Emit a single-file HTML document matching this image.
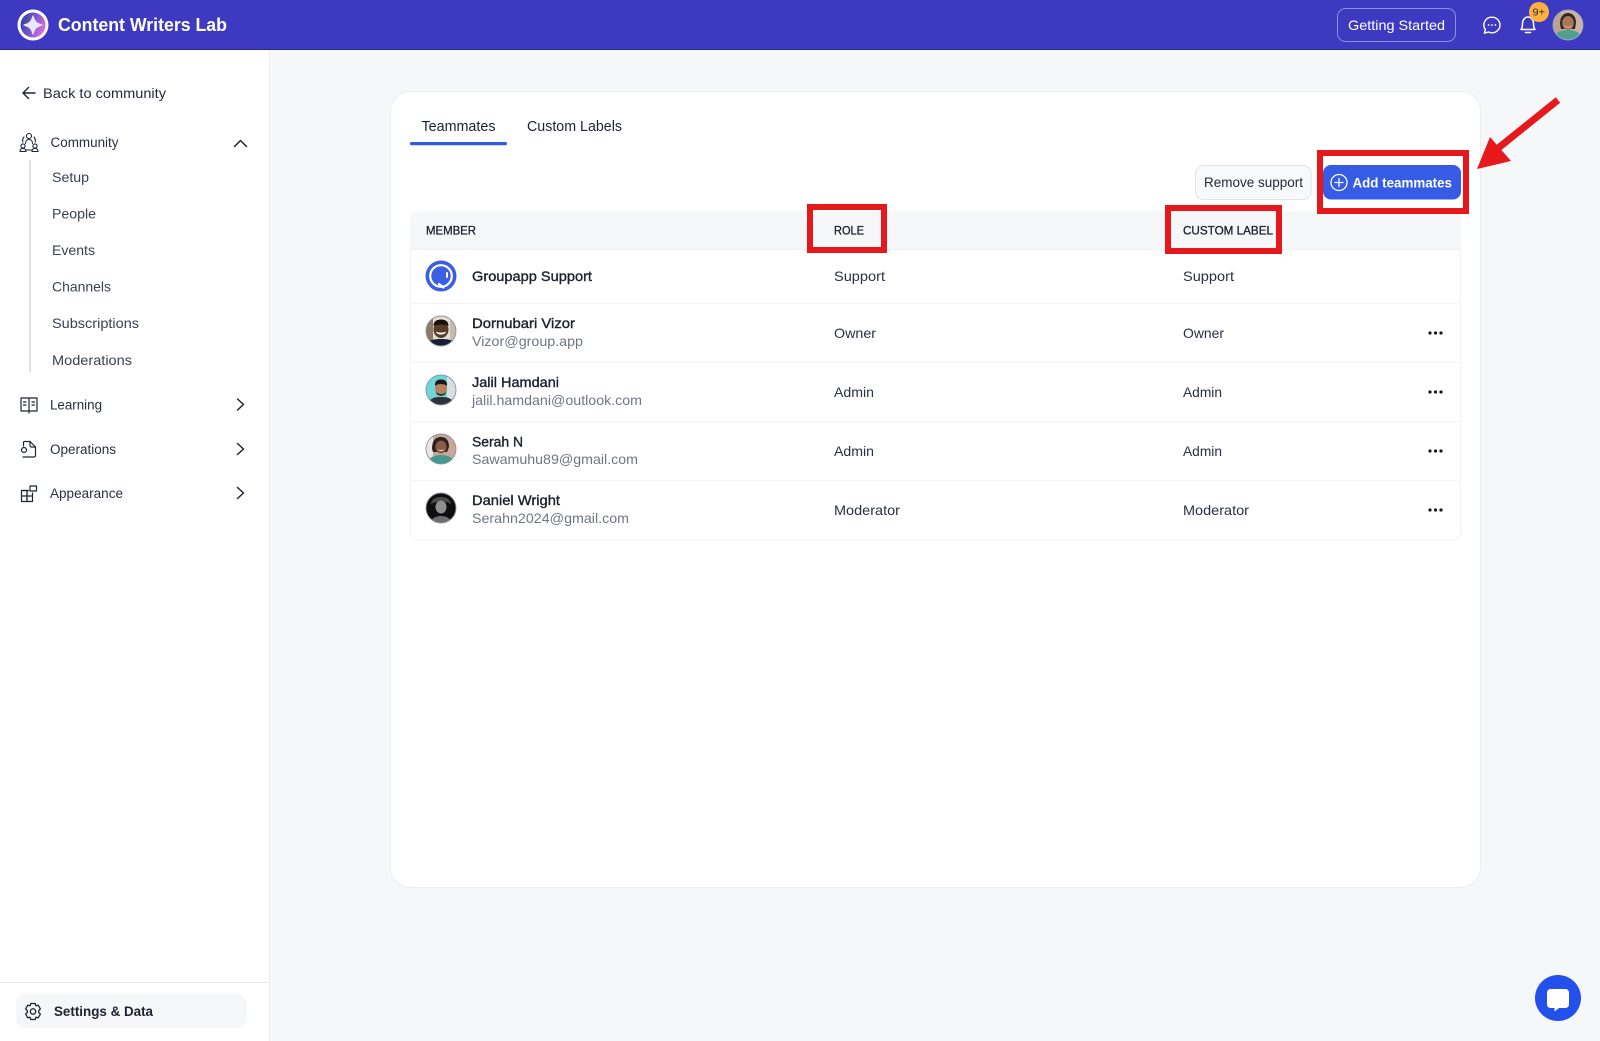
<!DOCTYPE html>
<html lang="en">
<head>
<meta charset="utf-8">
<title>Content Writers Lab</title>
<style>
html,body{margin:0;padding:0;width:1600px;height:1041px;overflow:hidden;background:#f6f7f9}
svg{display:block}
text{font-family:"Liberation Sans",sans-serif;fill:#1c2230;font-size:14px}
.side{font-size:13.5px;fill:#2a3040}
.sub{font-size:14px;fill:#3a4150}
.th{font-size:12px;fill:#1a1f2c;stroke:#1a1f2c;stroke-width:.3}
.nm{font-size:14px;fill:#1c2230;stroke:#1c2230;stroke-width:.38}
.em{font-size:14px;fill:#6f7682}
.val{font-size:14px;fill:#2a3040}
.ic{fill:none;stroke:#1f2533;stroke-width:1.3;stroke-linecap:round;stroke-linejoin:round}
.rb{fill:none;stroke:#e7181b;stroke-width:6}
</style>
</head>
<body>
<svg xmlns="http://www.w3.org/2000/svg" width="1600" height="1041" viewBox="0 0 1600 1041">
<defs>
<linearGradient id="lg" x1="0" y1="0" x2="1" y2="0.4"><stop offset="0" stop-color="#1f3a96"/><stop offset="0.5" stop-color="#6a55c4"/><stop offset="1" stop-color="#cf6cdc"/></linearGradient>
<clipPath id="c1"><circle cx="441" cy="331" r="15"/></clipPath>
<clipPath id="c2"><circle cx="441" cy="390" r="15"/></clipPath>
<clipPath id="c3"><circle cx="441" cy="449" r="15"/></clipPath>
<clipPath id="c4"><circle cx="441" cy="508" r="15"/></clipPath>
<clipPath id="c5"><circle cx="1568" cy="25" r="15"/></clipPath>
</defs>

<!-- page -->
<rect width="1600" height="1041" fill="#f6f7f9"/>

<!-- sidebar -->
<rect x="0" y="49" width="269" height="992" fill="#fff"/>
<rect x="269" y="49" width="1" height="992" fill="#eceef1"/>

<!-- header -->
<rect width="1600" height="49" fill="#3d3ac1"/>
<rect y="49" width="1600" height="1" fill="#2a2796"/>
<circle cx="33" cy="25" r="15.500" fill="#fff"/>
<circle cx="33" cy="25" r="12.500" fill="url(#lg)"/>
<path d="M33 16C34.500 21.500 36.500 23.500 42 25C36.500 26.500 34.500 28.500 33 34C31.500 28.500 29.500 26.500 24 25C29.500 23.500 31.500 21.500 33 16Z" fill="#ece6fc" stroke="#ece6fc" stroke-width="1.200" stroke-linejoin="round"/>
<text x="58" y="31" style="font-size:18px;font-weight:bold;fill:#fff" textLength="169" lengthAdjust="spacingAndGlyphs">Content Writers Lab</text>

<rect x="1337.500" y="8.500" width="118" height="33" rx="8" fill="none" stroke="#8f8dde" stroke-width="1"/>
<text x="1348" y="30" style="font-size:14px;fill:#fff" textLength="97" lengthAdjust="spacingAndGlyphs">Getting Started</text>

<!-- chat icon -->
<path d="M1492 17.200a8 7.800 0 0 1 0 15.600c-1.300 0-2.500-.3-3.500-.8l-4.200 1.200 1.100-3.600a7.800 7.800 0 0 1 6.600-12.400Z" fill="none" stroke="#fff" stroke-width="1.400" stroke-linejoin="round"/>
<circle cx="1488.600" cy="25" r=".9" fill="#fff"/><circle cx="1492" cy="25" r=".9" fill="#fff"/><circle cx="1495.400" cy="25" r=".9" fill="#fff"/>
<!-- bell -->
<path d="M1521 29.500c1.300-1.500 1.500-3 1.500-6a5.500 6.500 0 0 1 11 0c0 3 .2 4.500 1.500 6Z" fill="none" stroke="#fff" stroke-width="1.500" stroke-linejoin="round"/>
<path d="M1525.500 32.500h5" stroke="#fff" stroke-width="1.600" stroke-linecap="round"/>
<circle cx="1539" cy="12" r="10" fill="#fcb040"/>
<text x="1532.500" y="15.500" style="font-size:10px;fill:#2a2a3a" textLength="12.500" lengthAdjust="spacingAndGlyphs">9+</text>
<!-- header avatar -->
<g clip-path="url(#c5)">
<rect x="1553" y="10" width="30" height="30" fill="#c9b3a4"/>
<rect x="1553" y="10" width="8" height="30" fill="#b8a490"/>
<path d="M1560 24c0-8 4-11 8-11s8 3 8 10l-1 6h-14Z" fill="#33241f"/>
<ellipse cx="1568" cy="23" rx="5.800" ry="7" fill="#a87658"/>
<path d="M1564.500 25.500c2 2 5 2 7 0-.5 2.500-6.500 2.500-7 0Z" fill="#fff"/>
<path d="M1553 41c1-9 8-11 15-11s14 3 15 11Z" fill="#4f9e8f"/>
</g>
<circle cx="1568" cy="25" r="15" fill="none" stroke="#a9a8d8" stroke-width=".8"/>

<!-- sidebar content -->
<path d="M35 93H23M28.500 87.500L23 93l5.500 5.500" fill="none" stroke="#1f2533" stroke-width="1.400" stroke-linecap="round" stroke-linejoin="round"/>
<text x="43" y="98" style="font-size:14px;fill:#232938" textLength="123" lengthAdjust="spacingAndGlyphs">Back to community</text>

<!-- community icon -->
<g class="ic" style="stroke-width:1.100">
<circle cx="29" cy="136" r="2.500"/>
<path d="M25.500 143.500c0-2.500 1.500-4 3.500-4s3.500 1.500 3.500 4"/>
<path d="M22.800 142c-.5-1.800 0-3.500 1.200-5M35.200 142c.5-1.800 0-3.500-1.200-5M26 150h6"/>
<circle cx="23" cy="146" r="2.100"/><circle cx="35" cy="146" r="2.100"/>
<path d="M20 151.500c0-2 1.300-3 3-3s3 1 3 3ZM32 151.500c0-2 1.300-3 3-3s3 1 3 3Z"/>
</g>
<text class="side" x="50.500" y="147" textLength="68" lengthAdjust="spacingAndGlyphs">Community</text>
<path d="M234.500 146.500l6-6 6 6" fill="none" stroke="#1f2533" stroke-width="1.500" stroke-linecap="round" stroke-linejoin="round"/>
<rect x="29" y="160" width="2" height="212" fill="#dfe1e5"/>
<text class="sub" x="52" y="182" textLength="37" lengthAdjust="spacingAndGlyphs">Setup</text>
<text class="sub" x="52" y="218.500" textLength="44" lengthAdjust="spacingAndGlyphs">People</text>
<text class="sub" x="52" y="255" textLength="43" lengthAdjust="spacingAndGlyphs">Events</text>
<text class="sub" x="52" y="291.500" textLength="59" lengthAdjust="spacingAndGlyphs">Channels</text>
<text class="sub" x="52" y="328" textLength="87" lengthAdjust="spacingAndGlyphs">Subscriptions</text>
<text class="sub" x="52" y="365" textLength="80" lengthAdjust="spacingAndGlyphs">Moderations</text>

<!-- learning -->
<g class="ic" style="stroke-width:1.200">
<path d="M21 398h7.500c.4 0 .5.300.5.600v12.400h-8ZM37 398h-7.500c-.4 0-.5.300-.5.600v12.400h8Z"/>
<path d="M29 411v2M23.500 402h2.500M23.500 405h2.500M32 402h2.500M32 405h2.500"/>
</g>
<text class="side" x="50" y="409.500" textLength="52" lengthAdjust="spacingAndGlyphs">Learning</text>
<path d="M237.500 399l6 5.500-6 5.500" fill="none" stroke="#1f2533" stroke-width="1.500" stroke-linecap="round" stroke-linejoin="round"/>

<!-- operations -->
<g class="ic" style="stroke-width:1.200">
<path d="M23.500 446v-3.500a1 1 0 0 1 1-1h5.500l5.500 5.500v8.500a1.500 1.500 0 0 1-1.500 1.500h-11"/>
<path d="M30 441.500v4a1.500 1.500 0 0 0 1.500 1.500h4"/>
<circle cx="24" cy="450" r="2.500"/>
</g>
<text class="side" x="50" y="454" textLength="66" lengthAdjust="spacingAndGlyphs">Operations</text>
<path d="M237.500 443.500l6 5.500-6 5.500" fill="none" stroke="#1f2533" stroke-width="1.500" stroke-linecap="round" stroke-linejoin="round"/>

<!-- appearance -->
<g class="ic" style="stroke-width:1.200">
<path d="M21.500 490.500h5.500v5.500h-5.500ZM27 490.500h1.500M21.500 496h5.500v5.500h-5.500ZM27 496h5.500v5.500h-5.500ZM32.500 496v-3"/>
<path d="M21.500 490.500h5.500v11"/>
<rect x="30" y="486" width="6.500" height="5"/>
</g>
<text class="side" x="50" y="498" textLength="73" lengthAdjust="spacingAndGlyphs">Appearance</text>
<path d="M237.500 487.500l6 5.500-6 5.500" fill="none" stroke="#1f2533" stroke-width="1.500" stroke-linecap="round" stroke-linejoin="round"/>

<!-- settings -->
<rect x="0" y="982" width="269" height="1" fill="#e6e8eb"/>
<rect x="16" y="994" width="231" height="34" rx="10" fill="#f6f7f9"/>
<path d="M30.800 1003.500h4.400l.7 2.300 2.300-.6 2.200 3.700-1.700 1.700 0 1.800 1.700 1.700-2.200 3.700-2.300-.6-.7 2.300h-4.400l-.7-2.300-2.300.6-2.200-3.700 1.700-1.700 0-1.800-1.700-1.700 2.200-3.700 2.300.6Z" fill="none" stroke="#1f2533" stroke-width="1.300" stroke-linejoin="round"/>
<circle cx="33" cy="1011.500" r="2.700" fill="none" stroke="#1f2533" stroke-width="1.300"/>
<text x="54" y="1016" style="font-size:14px;font-weight:bold;fill:#1c2230" textLength="99" lengthAdjust="spacingAndGlyphs">Settings &amp; Data</text>

<!-- card -->
<rect x="390.500" y="91.500" width="1090" height="796" rx="20" fill="#fff" stroke="#eceef1"/>

<!-- tabs -->
<text x="421.500" y="131" style="font-size:14.500px;fill:#1c2230" textLength="74" lengthAdjust="spacingAndGlyphs">Teammates</text>
<text x="527" y="131" style="font-size:14.500px;fill:#1c2230" textLength="95" lengthAdjust="spacingAndGlyphs">Custom Labels</text>
<rect x="410" y="142" width="97" height="3.200" rx="1.600" fill="#2f5be6"/>

<!-- buttons -->
<rect x="1195.500" y="165.500" width="115.500" height="34" rx="8" fill="#f8f9fa" stroke="#e2e4e8"/>
<text x="1204" y="187" style="font-size:14px;fill:#232938" textLength="99" lengthAdjust="spacingAndGlyphs">Remove support</text>
<rect x="1323" y="165" width="138" height="34.500" rx="8" fill="#365ce5"/>
<circle cx="1339" cy="182.500" r="8" fill="none" stroke="#fff" stroke-width="1.300"/>
<path d="M1339 178.500v8M1335 182.500h8" stroke="#fff" stroke-width="1.300" stroke-linecap="round"/>
<text x="1352.500" y="187.500" style="font-size:14px;font-weight:bold;fill:#fff" textLength="99.500" lengthAdjust="spacingAndGlyphs">Add teammates</text>

<!-- table -->
<rect x="410.500" y="212" width="1050" height="328" rx="8" fill="#fff" stroke="#f2f3f5"/>
<path d="M410 249V220a8 8 0 0 1 8-8H1461V249Z" fill="#f6f7f9"/>
<rect x="410" y="249" width="1051" height="1" fill="#f0f1f3"/>
<rect x="410" y="303" width="1051" height="1" fill="#f3f4f6"/>
<rect x="410" y="362" width="1051" height="1" fill="#f3f4f6"/>
<rect x="410" y="421" width="1051" height="1" fill="#f3f4f6"/>
<rect x="410" y="480" width="1051" height="1" fill="#f3f4f6"/>

<text class="th" x="426" y="234.500" textLength="50" lengthAdjust="spacingAndGlyphs">MEMBER</text>
<text class="th" x="834" y="234.500" textLength="30" lengthAdjust="spacingAndGlyphs">ROLE</text>
<text class="th" x="1183" y="234.500" textLength="90" lengthAdjust="spacingAndGlyphs">CUSTOM LABEL</text>

<!-- avatars -->
<circle cx="441" cy="276" r="15.500" fill="#3a5fe3"/>
<circle cx="441" cy="276" r="10.800" fill="none" stroke="#fff" stroke-width="2.200"/>
<path d="M439 284l4.500 3.500" stroke="#fff" stroke-width="2.200" stroke-linecap="round"/>
<rect x="446" y="272" width="2" height="6" rx="1" fill="#fff"/>

<g clip-path="url(#c1)">
<rect x="426" y="316" width="30" height="30" fill="#e4ded2"/>
<rect x="426" y="316" width="7" height="30" fill="#8b7a66"/>
<rect x="450" y="316" width="6" height="30" fill="#c4bbae"/>
<path d="M426 347c1-7 7-8 15-8s14 1 15 8Z" fill="#152036"/>
<ellipse cx="441" cy="329.500" rx="7.500" ry="8.500" fill="#5a3a28"/>
<path d="M433.500 326c0-5 3.500-6.500 7.500-6.500s7.500 1.500 7.500 6.500c-3-2-12-2-15 0Z" fill="#15100e"/>
<path d="M436 331.500c2.500 1.500 7.500 1.500 10 0-.5 4-9.500 4-10 0Z" fill="#fff"/>
</g>
<circle cx="441" cy="331" r="15" fill="none" stroke="#8d93a0" stroke-width=".9"/>

<g clip-path="url(#c2)">
<rect x="426" y="375" width="30" height="30" fill="#6fd6dc"/>
<rect x="447" y="375" width="9" height="30" fill="#d9dee0"/>
<path d="M428 406c1-8 6-9 13-9s12 1 13 9Z" fill="#2f3338"/>
<ellipse cx="441" cy="388" rx="6" ry="7.500" fill="#b38366"/>
<path d="M435 386c-.5-5 2.500-6.500 6-6.500s6.500 1.500 6 6.500c-2-2.500-10-2.500-12 0Z" fill="#1f1a18"/>
<path d="M436 391c1 4 9 4 10 0l-.5 3c-2 2.500-7 2.500-9 0Z" fill="#3b2d28"/>
</g>
<circle cx="441" cy="390" r="15" fill="none" stroke="#8d93a0" stroke-width=".9"/>

<g clip-path="url(#c3)">
<rect x="426" y="434" width="30" height="30" fill="#c9a796"/>
<rect x="426" y="434" width="7" height="30" fill="#ece6e2"/>
<path d="M432 449c0-9 4-12 9-12s8 3 8 10l-2 5h-14Z" fill="#2e2220"/>
<ellipse cx="441" cy="447" rx="5.500" ry="6.500" fill="#8a5c48"/>
<path d="M438 449c1.500 1.500 4.500 1.500 6 0-.5 2.500-5.500 2.500-6 0Z" fill="#fff"/>
<path d="M427 465c1-8 8-10 14-10s13 2 14 10Z" fill="#3f9a90"/>
</g>
<circle cx="441" cy="449" r="15" fill="none" stroke="#8d93a0" stroke-width=".9"/>

<g clip-path="url(#c4)">
<rect x="426" y="493" width="30" height="30" fill="#0e0e0e"/>
<path d="M431 505c0-6 5-8 10-8s10 2 10 8c-2-3-4-3-10-3s-8 0-10 3Z" fill="#4a4a4a"/>
<ellipse cx="441" cy="507" rx="5.500" ry="6.500" fill="#8f8f8f"/>
<path d="M430 524c1-6 6-8 11-8s10 2 11 8Z" fill="#6d6d6d"/>
</g>
<circle cx="441" cy="508" r="15" fill="none" stroke="#8d93a0" stroke-width=".9"/>

<!-- row text -->
<text class="nm" x="472" y="281" textLength="120" lengthAdjust="spacingAndGlyphs">Groupapp Support</text>
<text class="val" x="834" y="281" textLength="51" lengthAdjust="spacingAndGlyphs">Support</text>
<text class="val" x="1183" y="281" textLength="51" lengthAdjust="spacingAndGlyphs">Support</text>

<text class="nm" x="472" y="328" textLength="103" lengthAdjust="spacingAndGlyphs">Dornubari Vizor</text>
<text class="em" x="472" y="346" textLength="111" lengthAdjust="spacingAndGlyphs">Vizor@group.app</text>
<text class="val" x="834" y="338" textLength="42" lengthAdjust="spacingAndGlyphs">Owner</text>
<text class="val" x="1183" y="338" textLength="41" lengthAdjust="spacingAndGlyphs">Owner</text>

<text class="nm" x="472" y="387" textLength="87" lengthAdjust="spacingAndGlyphs">Jalil Hamdani</text>
<text class="em" x="472" y="405" textLength="170" lengthAdjust="spacingAndGlyphs">jalil.hamdani@outlook.com</text>
<text class="val" x="834" y="397" textLength="40" lengthAdjust="spacingAndGlyphs">Admin</text>
<text class="val" x="1183" y="397" textLength="39" lengthAdjust="spacingAndGlyphs">Admin</text>

<text class="nm" x="472" y="446.500" textLength="51" lengthAdjust="spacingAndGlyphs">Serah N</text>
<text class="em" x="472" y="464" textLength="166" lengthAdjust="spacingAndGlyphs">Sawamuhu89@gmail.com</text>
<text class="val" x="834" y="456" textLength="40" lengthAdjust="spacingAndGlyphs">Admin</text>
<text class="val" x="1183" y="456" textLength="39" lengthAdjust="spacingAndGlyphs">Admin</text>

<text class="nm" x="472" y="505" textLength="88" lengthAdjust="spacingAndGlyphs">Daniel Wright</text>
<text class="em" x="472" y="523" textLength="157" lengthAdjust="spacingAndGlyphs">Serahn2024@gmail.com</text>
<text class="val" x="834" y="515" textLength="66" lengthAdjust="spacingAndGlyphs">Moderator</text>
<text class="val" x="1183" y="515" textLength="66" lengthAdjust="spacingAndGlyphs">Moderator</text>

<!-- dots -->
<g fill="#14181f">
<circle cx="1430" cy="333" r="1.600"/><circle cx="1435.500" cy="333" r="1.600"/><circle cx="1441" cy="333" r="1.600"/>
<circle cx="1430" cy="392" r="1.600"/><circle cx="1435.500" cy="392" r="1.600"/><circle cx="1441" cy="392" r="1.600"/>
<circle cx="1430" cy="451" r="1.600"/><circle cx="1435.500" cy="451" r="1.600"/><circle cx="1441" cy="451" r="1.600"/>
<circle cx="1430" cy="510" r="1.600"/><circle cx="1435.500" cy="510" r="1.600"/><circle cx="1441" cy="510" r="1.600"/>
</g>

<!-- annotations -->
<rect class="rb" x="810" y="207" width="74" height="43"/>
<rect class="rb" x="1168" y="208" width="111" height="43"/>
<rect class="rb" x="1320" y="153" width="146" height="58"/>
<path d="M1558 100L1497 149" stroke="#e7181b" stroke-width="7" fill="none"/>
<path d="M1477 169L1490 137L1511 161Z" fill="#e7181b"/>

<!-- chat fab -->
<circle cx="1558" cy="998" r="23" fill="#2350ea"/>
<path d="M1550.500 989h15a3.500 3.500 0 0 1 3.500 3.500v12a3.500 3.500 0 0 1-3.500 3.500h-6.500l-4.500 3.500v-3.500h-4a3.500 3.500 0 0 1-3.500-3.500v-12a3.500 3.500 0 0 1 3.500-3.500Z" fill="#fff"/>
</svg>
</body>
</html>
